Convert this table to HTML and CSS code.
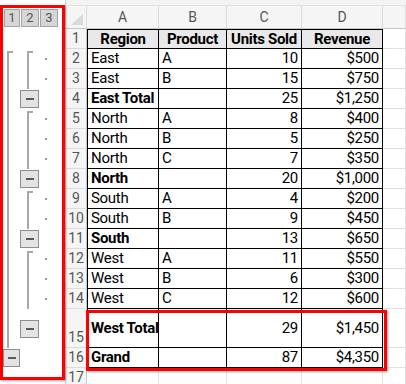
FILE: index.html
```html
<!DOCTYPE html>
<html>
<head>
<meta charset="utf-8">
<link rel="stylesheet" href="styles.css">
</head>
<body>
<div class="app">
  <div class="outline">
    <div class="levels">
      <span class="lvl">1</span><span class="lvl">2</span><span class="lvl">3</span>
    </div>
    <div class="br1"></div>
    <div class="br2 g-east"></div>
    <div class="br2 g-north"></div>
    <div class="br2 g-south"></div>
    <div class="br2 g-west"></div>
    <div class="btn b1 r16"><i></i></div>
    <div class="btn b2 r4"><i></i></div>
    <div class="btn b2 r8"><i></i></div>
    <div class="btn b2 r11"><i></i></div>
    <div class="btn b2 r15"><i></i></div>
    <i class="dot r2"></i><i class="dot r3"></i>
    <i class="dot r5"></i><i class="dot r6"></i><i class="dot r7"></i>
    <i class="dot r9"></i><i class="dot r10"></i>
    <i class="dot r12"></i><i class="dot r13"></i><i class="dot r14"></i>
  </div>

  <div class="sheet">
    <div class="strip"></div>
    <div class="row colhdr">
      <div class="corner"><span class="tri"></span></div>
      <div class="ch">A</div><div class="ch">B</div><div class="ch">C</div><div class="ch">D</div><div class="ch"></div>
    </div>
    <div class="row t first">
      <div class="rh">1</div>
      <div class="c a b hc">Region</div><div class="c b hc">Product</div><div class="c b hc">Units Sold</div><div class="c b hc">Revenue</div><div class="e"></div>
    </div>
    <div class="row t"><div class="rh">2</div><div class="c a">East</div><div class="c">A</div><div class="c n">10</div><div class="c n">$500</div><div class="e"></div></div>
    <div class="row t"><div class="rh">3</div><div class="c a">East</div><div class="c">B</div><div class="c n">15</div><div class="c n">$750</div><div class="e"></div></div>
    <div class="row t"><div class="rh">4</div><div class="c a b">East Total</div><div class="c"></div><div class="c n">25</div><div class="c n">$1,250</div><div class="e"></div></div>
    <div class="row t"><div class="rh">5</div><div class="c a">North</div><div class="c">A</div><div class="c n">8</div><div class="c n">$400</div><div class="e"></div></div>
    <div class="row t"><div class="rh">6</div><div class="c a">North</div><div class="c">B</div><div class="c n">5</div><div class="c n">$250</div><div class="e"></div></div>
    <div class="row t"><div class="rh">7</div><div class="c a">North</div><div class="c">C</div><div class="c n">7</div><div class="c n">$350</div><div class="e"></div></div>
    <div class="row t"><div class="rh">8</div><div class="c a b">North</div><div class="c"></div><div class="c n">20</div><div class="c n">$1,000</div><div class="e"></div></div>
    <div class="row t"><div class="rh">9</div><div class="c a">South</div><div class="c">A</div><div class="c n">4</div><div class="c n">$200</div><div class="e"></div></div>
    <div class="row t"><div class="rh">10</div><div class="c a">South</div><div class="c">B</div><div class="c n">9</div><div class="c n">$450</div><div class="e"></div></div>
    <div class="row t"><div class="rh">11</div><div class="c a b">South</div><div class="c"></div><div class="c n">13</div><div class="c n">$650</div><div class="e"></div></div>
    <div class="row t"><div class="rh">12</div><div class="c a">West</div><div class="c">A</div><div class="c n">11</div><div class="c n">$550</div><div class="e"></div></div>
    <div class="row t"><div class="rh">13</div><div class="c a">West</div><div class="c">B</div><div class="c n">6</div><div class="c n">$300</div><div class="e"></div></div>
    <div class="row t"><div class="rh">14</div><div class="c a">West</div><div class="c">C</div><div class="c n">12</div><div class="c n">$600</div><div class="e"></div></div>
    <div class="row t tall"><div class="rh bottom">15</div><div class="c a b">West Total</div><div class="c"></div><div class="c n">29</div><div class="c n">$1,450</div><div class="e"></div></div>
    <div class="row t"><div class="rh">16</div><div class="c a b">Grand</div><div class="c"></div><div class="c n">87</div><div class="c n">$4,350</div><div class="e"></div></div>
    <div class="row"><div class="rh">17</div><div class="e"></div><div class="e"></div><div class="e"></div><div class="e"></div><div class="e"></div></div>
    <div class="hl hl-total"></div>
  </div>
  <div class="hl hl-outline"></div>
</div>
</body>
</html>
```

FILE: styles.css
```css
html, body {
  margin: 0;
  padding: 0;
  background: #fff;
}
body {
  width: 406px;
  height: 384px;
  overflow: hidden;
  font-family: Roboto, "Liberation Sans", Arial, sans-serif;
  color: #000;
}
.app {
  position: relative;
  display: flex;
  width: 406px;
  height: 384px;
  overflow: hidden;
}

/* ---------- outline panel ---------- */
.outline {
  width: 66px;
  flex: none;
  display: grid;
  grid-template-columns: 20px 19px 19px 8px;
  grid-template-rows: 6px 23px repeat(14, 20px) 39px 20px 20px;
  background: #fff;
  border-right: 1px solid #d0d0d0;
  box-sizing: border-box;
}
.levels {
  grid-column: 1 / 4;
  grid-row: 2;
  align-self: center;
  display: flex;
  margin-left: 4px;
  height: 18px;
}
.lvl {
  width: 16px;
  height: 18px;
  box-sizing: border-box;
  background: #d6d6d6;
  border: 1px solid #a3a3a3;
  color: #555;
  font-size: 13px;
  line-height: 16px;
  text-align: center;
}
.lvl + .lvl { margin-left: 1px; width: 18px; }

.br1 {
  grid-column: 1;
  grid-row: 4 / 18;
  margin-left: 7px;
  margin-top: 2px;
  width: 4px;
  border-left: 2px solid #a8a8a8;
  border-top: 2px solid #a8a8a8;
}
.br2 {
  grid-column: 2;
  margin-left: 7px;
  margin-top: 2px;
  width: 4px;
  border-left: 2px solid #a8a8a8;
  border-top: 2px solid #a8a8a8;
}
.g-east { grid-row: 4 / 6; }
.g-north { grid-row: 7 / 10; }
.g-south { grid-row: 11 / 13; }
.g-west { grid-row: 14 / 17; }

.btn {
  align-self: center;
  height: 18px;
  box-sizing: border-box;
  background: #e3e3e3;
  border: 1px solid #8e8e8e;
  display: flex;
  align-items: center;
  justify-content: center;
}
.btn i {
  display: block;
  width: 8px;
  height: 2px;
  background: #5a5a5a;
}
.b1 { grid-column: 1; width: 17px; margin-left: 3px; }
.b2 { grid-column: 2; width: 19px; }
.dot {
  grid-column: 3;
  align-self: center;
  width: 2px;
  height: 2px;
  margin-left: 6px;
  background: #9a9a9a;
}
.r2 { grid-row: 4; } .r3 { grid-row: 5; } .r4 { grid-row: 6; }
.r5 { grid-row: 7; } .r6 { grid-row: 8; } .r7 { grid-row: 9; }
.r8 { grid-row: 10; } .r9 { grid-row: 11; } .r10 { grid-row: 12; }
.r11 { grid-row: 13; } .r12 { grid-row: 14; } .r13 { grid-row: 15; }
.r14 { grid-row: 16; } .r15 { grid-row: 17; } .r16 { grid-row: 18; }

/* ---------- sheet ---------- */
.sheet {
  position: relative;
  flex: 1;
  display: flex;
  flex-direction: column;
}
.strip {
  height: 6px;
  flex: none;
  background: #f3f3f3;
  border-bottom: 1px solid #e2e2e2;
  box-sizing: border-box;
}
.row {
  display: grid;
  grid-template-columns: 21px 72px 68px 75px 81px 1fr;
  height: 20px;
  flex: none;
}
.row > div {
  box-sizing: border-box;
  border-right: 1px solid #e1e1e1;
  border-bottom: 1px solid #e1e1e1;
  overflow: hidden;
  white-space: nowrap;
}
.colhdr { height: 23px; }
.colhdr > div {
  background: #f5f5f5;
  border-bottom: 1px solid #c6c6c6;
  border-right: 1px solid #dcdcdc;
  color: #555;
  font-size: 14px;
  text-align: center;
  line-height: 23px;
}
.corner { position: relative; }
.tri {
  position: absolute;
  right: 3px;
  bottom: 3px;
  width: 0;
  height: 0;
  border-left: 12px solid transparent;
  border-bottom: 11px solid #dadada;
}
.row > .rh {
  background: #f5f5f5;
  border-right: 1px solid #c6c6c6;
  border-bottom: 1px solid #dcdcdc;
  color: #555;
  font-size: 14px;
  text-align: center;
  line-height: 19px;
}
.rh.bottom {
  display: flex;
  align-items: flex-end;
  justify-content: center;
  line-height: 19px;
}
.tall { height: 39px; }
.c {
  font-size: 15px;
  letter-spacing: -0.3px;
  line-height: 19px;
  padding: 0 3px;
  display: flex;
  align-items: center;
}
.row > .c {
  border-right: 1px solid #000;
  border-bottom: 1px solid #000;
}
.row > .c.a { border-left: 1px solid #000; }
.first > .c { border-top: 1px solid #000; }
.c.b { font-weight: bold; }
.c.hc { justify-content: center; background: #e9e9e9; }
.c.n { justify-content: flex-end; }

/* ---------- red highlight overlays ---------- */
.hl {
  position: absolute;
  box-sizing: border-box;
  border: 3px solid #f00;
  box-shadow: 1px 1px 2px rgba(0, 0, 0, 0.35);
  pointer-events: none;
}
.hl-outline {
  left: 0;
  top: 5px;
  width: 65px;
  height: 375px;
}
.hl-total {
  left: 20px;
  top: 310px;
  width: 301px;
  height: 61px;
}
```
